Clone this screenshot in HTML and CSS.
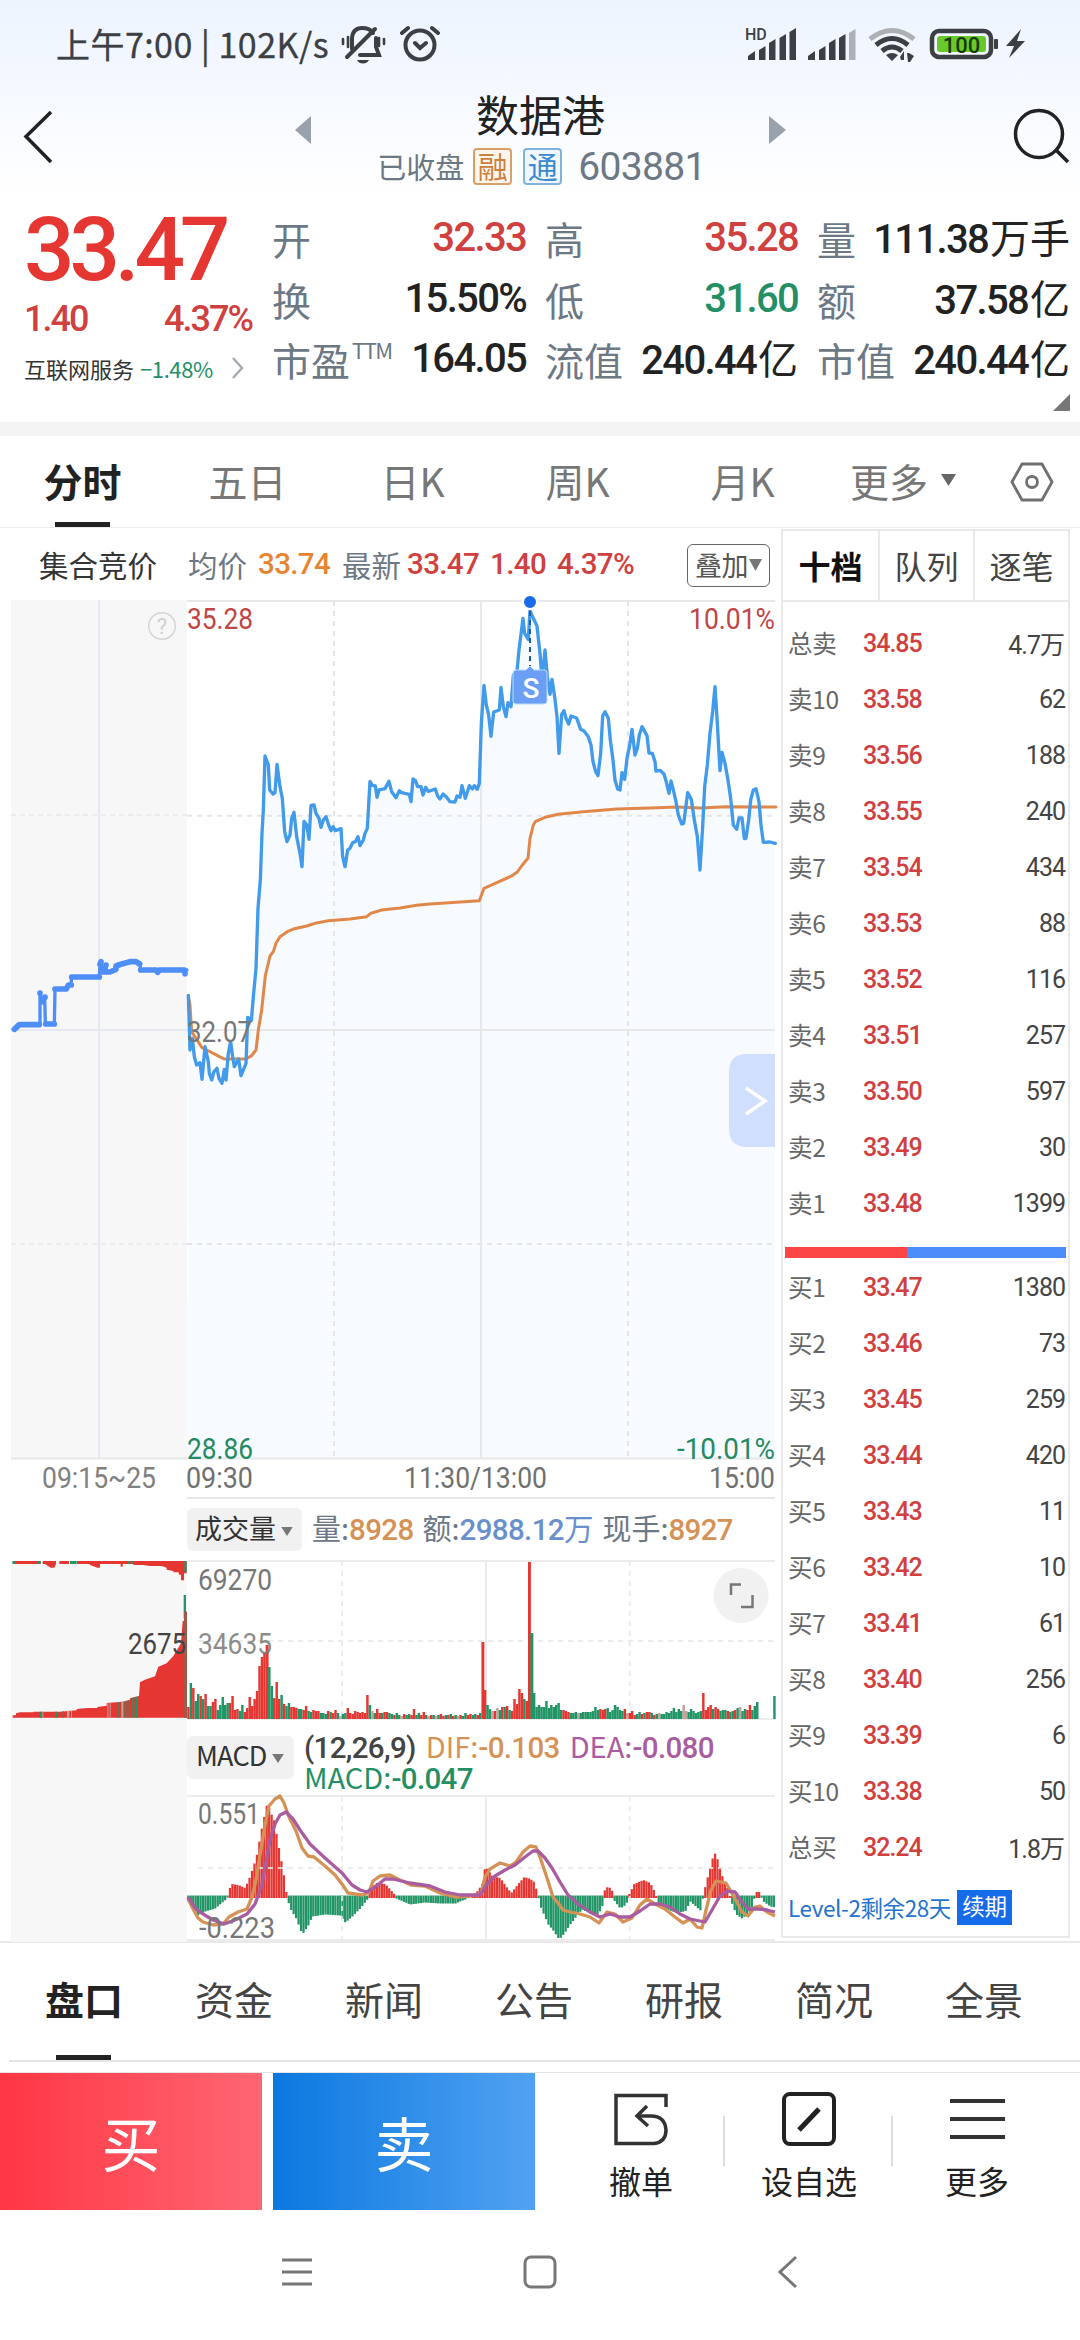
FILE: index.html
```html
<!DOCTYPE html>
<html lang="zh-CN">
<head>
<meta charset="utf-8">
<title>数据港 603881</title>
<link rel="stylesheet" href="styles.css">
</head>
<body>
<div class="screen">
  <div class="top">
    <div class="status">
      <span class="status-text">上午7:00 | 102K/s</span>
      <svg class="status-left" width="110" height="60" viewBox="330 15 110 60" fill="none" stroke="#3c3f43" stroke-linecap="round">
        <path d="M352 49V38Q353 28 362 28Q370 28 373 33M376 38V47L379 55H360" stroke-width="4"/>
        <path d="M347 57L375 29" stroke-width="4"/>
        <path d="M343 39V44M348 37V47M379 38V46M384 39V44" stroke-width="2.6"/>
        <path d="M357 60H369Q367 63.500 363 63.500Q359 63.500 357 60Z" fill="#3c3f43" stroke="none"/>
        <circle cx="420" cy="45" r="14.500" stroke-width="4"/>
        <path d="M402 33L408 28M432 28L438 33M415 43L420 48L426 43" stroke-width="4"/>
      </svg>
      <svg class="status-right" width="300" height="60" viewBox="735 15 300 60">
        <text x="745" y="40" class="hd">HD</text>
        <g fill="#3c3f43">
          <path d="M748 60V56L755 51V60ZM759 60V50L765.500 46V60ZM769 60V43L775.500 39V60ZM779.500 60V38L786 34V60ZM789.500 60V32L796 28V60Z"/>
          <path d="M808 60V56L815 51V60ZM819 60V50L825.500 46V60ZM829 60V43L835.500 39V60ZM839 60V38L845.500 34V60Z"/>
          <path d="M849 60V33L855.500 29V60Z" fill="#adb0b5"/>
          <path d="M886 55L892 61L898 55Q892 51 886 55ZM900 57L904 51V60H901ZM907 53H909L914 56L910 62H908Z"/>
        </g>
        <g fill="none" stroke="#3c3f43" stroke-width="5">
          <path d="M870 39Q892 22 914 39" stroke="#adb0b5"/>
          <path d="M876 45Q892 32 908 45M882 51Q892 43 902 51"/>
          <rect x="932" y="31" width="59" height="26" rx="7" stroke-width="4.500"/>
        </g>
        <rect x="937" y="36" width="49" height="16" rx="3" fill="#68ca2a"/>
        <text x="961.500" y="52.500" class="batt">100</text>
        <rect x="994" y="39" width="4" height="10" rx="1" fill="#3c3f43"/>
        <path d="M1021 29L1006 46H1014L1009 58L1025 41H1017Z" fill="#3c3f43"/>
      </svg>
    </div>
    <div class="header">
      <svg width="40" height="60" viewBox="18 106 40 60" fill="none" stroke="#222" stroke-width="3.500"><path d="M51 112L26 136.500L51 162"/></svg>
      <svg width="20" height="30" viewBox="294 115 20 30"><path d="M311 116V144L295 130Z" fill="#98a2ad"/></svg>
      <div class="title">
        <div class="name">数据港</div>
        <div class="sub"><span>已收盘</span><i class="badge margin">融</i><i class="badge link">通</i><span class="num code">603881</span></div>
      </div>
      <svg width="20" height="30" viewBox="767 115 20 30"><path d="M769 116V144L786 130Z" fill="#98a2ad"/></svg>
      <svg width="60" height="60" viewBox="1012 106 60 60" fill="none" stroke="#222" stroke-width="3.500"><circle cx="1039" cy="134" r="23.500"/><path d="M1055 149L1068 162"/></svg>
    </div>
  </div>

  <div class="quote">
    <div class="last">
      <div class="price num">33.47</div>
      <div class="delta num"><span>1.40</span><span>4.37%</span></div>
      <div class="sector"><span>互联网服务</span><span class="down">−1.48%</span><svg width="13" height="22" viewBox="0 0 13 22" fill="none" stroke="#a5acb4" stroke-width="2.500"><path d="M2 1L11 11L2 21"/></svg></div>
    </div>
    <div class="facts">
      <div class="fact"><span>开</span><b class="num up">32.33</b></div>
      <div class="fact"><span>高</span><b class="num up">35.28</b></div>
      <div class="fact"><span>量</span><b class="num">111.38<em>万手</em></b></div>
      <div class="fact"><span>换</span><b class="num">15.50%</b></div>
      <div class="fact"><span>低</span><b class="num down">31.60</b></div>
      <div class="fact"><span>额</span><b class="num">37.58<em>亿</em></b></div>
      <div class="fact"><span>市盈<sup>TTM</sup></span><b class="num">164.05</b></div>
      <div class="fact"><span>流值</span><b class="num">240.44<em>亿</em></b></div>
      <div class="fact"><span>市值</span><b class="num">240.44<em>亿</em></b></div>
    </div>
    <svg class="corner" width="17" height="17" viewBox="0 0 17 17"><path d="M17 0V17H0Z" fill="#777"/></svg>
  </div>

  <div class="periods">
    <div class="period on">分时</div><div class="period">五日</div><div class="period">日K</div><div class="period">周K</div><div class="period">月K</div>
    <div class="period more">更多<svg width="15" height="12" viewBox="0 0 15 12"><path d="M0 0H15L7.500 12Z" fill="#666"/></svg></div>
    <div class="setting"><svg width="44" height="42" viewBox="0 0 44 42" fill="none" stroke="#707070" stroke-width="2.800"><path d="M12 3H32L42 21L32 39H12L2 21Z" stroke-linejoin="round"/><circle cx="22" cy="21" r="5.500"/></svg></div>
  </div>

  <div class="main">
    <div class="charts">
      <div class="info">
        <span class="auction">集合竞价</span>
        <span class="lbl">均价</span><b class="num avg">33.74</b>
        <span class="lbl latest">最新</span><b class="num up">33.47</b><b class="num up chg">1.40</b><b class="num up">4.37%</b>
        <div class="overlay">叠加<svg width="13" height="12" viewBox="0 0 13 12"><path d="M0 0H13L6.500 12Z" fill="#777"/></svg></div>
      </div>
      <svg class="plot" width="778" height="907" viewBox="0 593 778 907">
        <rect x="11" y="600" width="176" height="858" fill="#f7f7f7"/>
        <path d="M99 600V1458M11 1030H187" stroke="#e6e9f2" stroke-width="2"/>
        <path d="M11 815H187M11 1244H187" stroke="#ececef" stroke-width="2" stroke-dasharray="5 4"/>
        <g transform="translate(0 580) scale(.33333)">
          <path id="area" fill="#f7faff"/>
        </g>
        <path d="M187 601H775M11 1458.500H775M187 1030H775M481 601V1458M187 1498H775" stroke="#e7e8e8" stroke-width="2" fill="none"/>
        <path d="M187 815.700H775M187 1244H775M334 601V1458M628 601V1458" stroke="#e5e5e5" stroke-width="2" stroke-dasharray="5 5" fill="none"/>
        <g transform="translate(0 580) scale(.33333)" fill="none" stroke-linejoin="round" stroke-linecap="round">
          <polyline stroke="#e0884a" stroke-width="9" points="565,1248 570,1275 575,1355 590,1378 605,1402 620,1410 640,1420 672,1437 738,1437 755,1427 768,1410 775,1350 785,1290 796,1187 810,1128 820,1115 828,1090 840,1070 862,1055 880,1047 920,1038 945,1030 985,1022 1050,1017 1100,1010 1112,1000 1145,990 1200,984 1250,976 1290,972 1370,967 1438,962 1452,925 1482,912 1535,888 1552,876 1567,855 1584,835 1590,775 1600,735 1606,725 1635,712 1675,703 1750,695 1850,687 1950,684 2030,681 2100,684 2180,680 2328,681"/>
          <polyline id="price" stroke="#429bea" stroke-width="10" points="565,1246 570,1410 577,1375 583,1430 590,1455 600,1448 606,1498 615,1400 625,1445 628,1480 635,1500 642,1475 651,1465 657,1495 666,1510 673,1468 678,1500 685,1420 692,1385 698,1430 703,1460 716,1437 723,1487 738,1450 743,1312 754,1322 760,1250 768,1165 774,985 781,900 786,760 790,690 795,528 805,555 809,630 819,642 825,638 831,553 840,620 847,655 854,755 861,785 870,765 875,715 882,697 890,770 900,820 906,860 912,724 920,735 927,778 933,676 942,675 948,700 957,715 963,742 970,720 978,710 986,735 993,752 999,740 1006,752 1023,746 1028,830 1035,860 1043,810 1050,805 1058,788 1066,785 1074,770 1080,797 1090,780 1095,760 1102,745 1110,604 1117,616 1126,618 1131,652 1137,630 1155,626 1167,604 1175,635 1188,653 1198,632 1205,638 1228,643 1233,665 1239,597 1246,601 1253,620 1263,620 1269,645 1277,622 1285,634 1306,627 1313,648 1320,657 1329,642 1340,652 1350,665 1365,666 1371,648 1380,652 1386,617 1396,655 1408,617 1417,627 1423,617 1432,628 1438,610 1444,430 1452,316 1459,375 1466,405 1473,469 1481,396 1498,390 1503,322 1510,380 1518,410 1524,368 1533,380 1540,285 1549,295 1557,210 1569,115 1574,160 1585,178 1590,92 1600,115 1611,138 1620,220 1626,300 1635,210 1642,290 1650,343 1656,298 1664,350 1671,410 1677,520 1685,403 1692,392 1698,415 1706,432 1713,408 1730,414 1742,448 1752,453 1765,470 1773,495 1779,545 1787,575 1794,587 1802,520 1808,408 1815,395 1825,415 1831,480 1839,540 1845,600 1853,627 1860,630 1866,578 1874,598 1881,535 1890,490 1896,448 1905,525 1912,505 1918,465 1926,440 1941,467 1947,519 1957,520 1965,545 1968,573 1980,571 1992,582 2000,610 2007,640 2013,603 2020,630 2028,665 2035,705 2045,732 2051,730 2057,685 2063,638 2074,658 2083,720 2092,770 2100,870 2108,740 2114,620 2122,555 2130,460 2138,395 2145,320 2152,430 2160,572 2166,517 2175,550 2184,600 2192,655 2200,735 2210,748 2217,714 2226,714 2233,776 2238,775 2246,720 2252,660 2260,630 2268,626 2277,665 2283,735 2290,787 2310,786 2326,790"/>
          <g stroke="#4d8ef9">
            <polyline stroke-width="10" points="42,1348 52,1335 120,1334 120,1238 127,1268 134,1250 136,1332 163,1332 165,1227 200,1225 205,1215 213,1215 215,1191 298,1191 300,1150 303,1144 307,1176 318,1155 320,1176 335,1175 348,1165 355,1152 375,1150 390,1144 410,1144 420,1152 422,1170 561,1170"/>
            <path stroke-width="17" d="M43 1348L58 1334H118M120 1239V1240M128 1264V1265M135 1251V1252M137 1332H163M165 1227H199L205 1215H214M215 1191H298M300 1153L303 1145M318 1155V1156M307 1176H330L348 1168V1158L365 1152L390 1145H408L419 1152M422 1170H468L473 1177L478 1170H553M555 1180V1181"/>
          </g>
        </g>
        <circle cx="162" cy="626" r="13.300" fill="none" stroke="#d5d5d5" stroke-width="1.500"/>
        <text x="162" y="634" class="hint" text-anchor="middle">?</text>
        <circle cx="530" cy="602" r="7" fill="#1a6be6" stroke="#fff" stroke-width="2"/>
        <path d="M530 611V666" stroke="#1f5c9e" stroke-width="2" stroke-dasharray="5 4"/>
        <path d="M516 670H526L530 666L534 670H544Q547 670 547 673V701Q547 704 544 704H516Q513 704 513 701V673Q513 670 516 670Z" fill="#6b9ff5" stroke="#b9dbfc" stroke-width="1"/>
        <text x="531" y="698" class="sell-mark" text-anchor="middle">S</text>
        <path d="M775 1054H747Q729 1054 729 1072V1128Q729 1147 747 1147H775Z" fill="#cfdffd"/>
        <path d="M746 1088L765 1101L746 1114" fill="none" stroke="#fff" stroke-width="3.500"/>
        <g class="axis">
          <text x="187" y="628.500" fill="#c04545" textLength="66" lengthAdjust="spacingAndGlyphs">35.28</text>
          <text x="775" y="629" fill="#c04545" text-anchor="end" textLength="86" lengthAdjust="spacingAndGlyphs">10.01%</text>
          <text x="187" y="1042" fill="#777" textLength="65" lengthAdjust="spacingAndGlyphs">32.07</text>
          <text x="187" y="1459" fill="#248a62" textLength="66" lengthAdjust="spacingAndGlyphs">28.86</text>
          <text x="775" y="1459" fill="#248a62" text-anchor="end" textLength="98" lengthAdjust="spacingAndGlyphs">-10.01%</text>
          <text x="42" y="1488" fill="#808080" textLength="114" lengthAdjust="spacingAndGlyphs">09:15~25</text>
          <text x="186" y="1488" fill="#707070" textLength="67" lengthAdjust="spacingAndGlyphs">09:30</text>
          <text x="404" y="1488" fill="#707070" textLength="143" lengthAdjust="spacingAndGlyphs">11:30/13:00</text>
          <text x="775" y="1488" fill="#707070" text-anchor="end" textLength="66" lengthAdjust="spacingAndGlyphs">15:00</text>
        </g>
      </svg>
      <div class="indicator volume-head">
        <div class="pick">成交量<svg width="12" height="9" viewBox="0 0 14 11"><path d="M0 0H14L7 11Z" fill="#777"/></svg></div>
        <div class="readout"><span>量:<b class="num orange">8928</b></span><span>额:<b class="num blue">2988.12<em>万</em></b></span><span>现手:<b class="num orange">8927</b></span></div>
      </div>
      <svg class="plot" width="778" height="175" viewBox="0 1555 778 175">
        <rect x="11" y="1562" width="176" height="168" fill="#f7f7f7"/>
        <path d="M187 1561H775M187 1719H775M486 1561V1719" stroke="#ececec" stroke-width="2"/>
        <path d="M198 1641H775M342 1561V1719M629.700 1561V1719" stroke="#ececec" stroke-width="2" stroke-dasharray="5 5"/>
        <g transform="translate(0 1555) scale(.33333)">
          <path fill="#e53632" d="M38 18H122V27H38ZM128 18H168V27L163 38H152L135 27H128ZM178 18H207V27H178ZM231 18H560V55H552V76H543V60L536 58V52H520V48L500 44V38L485 33H450L430 30H400V27H368V35H362V27H300V38H292L270 30V27H231Z"/>
          <path fill="#e53632" d="M38 488V481H48V475L60 472H100V470H180L230 466V462L262 459H292V456L320 452V444L368 440L390 434V430L417 423L420 382L435 374L465 364L475 335L500 325L520 303L527 292L543 265L548 198H552V170H561V488Z"/>
          <path fill="#219565" d="M38 18H48V27H38ZM112 18H122V27H112ZM210 18H230V27H210ZM384 18H389V27H384ZM394 18H398V27H394ZM553 18H560V52H553ZM119 470H126V488H119ZM165 470H171V488H165ZM188 469H192V488H188ZM355 441H359V488H355ZM374 438H379V488H374ZM386 435H390V488H386ZM397 428H403V488H397ZM407 425H414V488H407ZM551 120H558V190H551Z"/>
          <path fill="#c3a29a" d="M201 467H208V488H201ZM213 468H216V488H213ZM322 443H325V488H322ZM329 443H332V488H329ZM364 440H370V488H364ZM127 470H130V488H127Z"/>
          <path fill="#a05a49" d="M552 170H561V488H552Z"/>
        </g>
        <g id="volume"></g>
        <g class="axis">
          <text x="198" y="1590" fill="#777" textLength="74" lengthAdjust="spacingAndGlyphs">69270</text>
          <text x="198" y="1654" fill="#777" fill-opacity=".85" textLength="74" lengthAdjust="spacingAndGlyphs">34635</text>
          <text x="128" y="1654" fill="#444" textLength="58" lengthAdjust="spacingAndGlyphs">2675</text>
        </g>
        <circle cx="741" cy="1595.500" r="27.500" fill="#f1f1f1"/>
        <path d="M731 1595V1584.500H741M741 1607H752.500V1595" fill="none" stroke="#777" stroke-width="2.500"/>
      </svg>
      <div class="indicator macd-head">
        <div class="pick">MACD<svg width="12" height="9" viewBox="0 0 13 10"><path d="M0 0H13L6.500 10Z" fill="#777"/></svg></div>
        <div class="readout macd-read"><span class="dark"><b class="num">(12,26,9)</b></span><span class="orange">DIF:<b class="num">-0.103</b></span><span class="purple">DEA:<b class="num">-0.080</b></span><span class="green">MACD:<b class="num">-0.047</b></span></div>
      </div>
      <svg class="plot" width="778" height="152" viewBox="0 1790 778 152">
        <rect x="11" y="1790" width="176" height="152" fill="#f7f7f7"/>
        <path d="M187 1796H775M187 1940H775M486 1796V1940" stroke="#ececec" stroke-width="2"/>
        <g id="macd"></g>
        <path d="M198 1868H775M342 1796V1940M629.700 1796V1940" stroke="#e9e9e9" stroke-opacity=".8" stroke-width="2" stroke-dasharray="5 5"/>
        <g fill="none" stroke-width="3.300" stroke-linejoin="round">
          <polyline stroke="#d59257" points="188,1898 192,1907 198,1918 203,1922 213,1925 223,1924 229,1917 238,1912 247,1909 252,1897 256,1880 260,1855 265,1825 269,1806 275,1799 280,1796 284,1803 289,1817 296,1831 302,1848 308,1856 314,1857 325,1866 335,1875 342,1884 348,1893 355,1894 363,1895 369,1892 373,1881 380,1876 390,1875 400,1880 411,1885 425,1886 440,1893 455,1897 470,1896 481,1894 485,1877 490,1869 500,1863 510,1866 516,1862 523,1852 530,1846 536,1847 541,1860 547,1878 553,1897 558,1903 563,1910 570,1912 580,1914 590,1917 599,1923 607,1912 615,1914 623,1922 632,1918 640,1905 647,1899 655,1904 665,1909 675,1917 683,1923 690,1919 697,1927 702,1928 706,1910 711,1890 716,1881 726,1883 733,1895 742,1912 748,1916 755,1907 760,1906 767,1912 775,1916"/>
          <polyline stroke="#a95c9f" points="188,1897 195,1908 203,1914 213,1920 224,1924 235,1920 247,1914 255,1904 262,1885 266,1862 270,1840 275,1824 280,1815 286,1812 293,1819 300,1830 310,1844 325,1858 342,1873 352,1885 360,1890 367,1892 375,1887 385,1879 393,1879 410,1883 430,1886 445,1892 460,1895 480,1895 487,1884 495,1876 505,1870 515,1865 525,1857 533,1851 538,1851 545,1858 552,1868 560,1882 568,1895 578,1904 590,1912 600,1917 610,1914 620,1917 630,1917 640,1911 650,1904 660,1904 670,1907 680,1914 690,1919 705,1922 712,1910 720,1896 727,1891 735,1892 742,1902 748,1909 758,1909 767,1910 775,1912"/>
        </g>
        <g class="axis">
          <text x="198" y="1824" fill="#777" textLength="62" lengthAdjust="spacingAndGlyphs">0.551</text>
          <text x="199" y="1938" fill="#777" textLength="76" lengthAdjust="spacingAndGlyphs">-0.223</text>
        </g>
      </svg>
    </div>

    <div class="book">
      <div class="book-tabs"><div class="on">十档</div><div>队列</div><div>逐笔</div></div>
      <div class="rows" id="asks"></div>
      <div class="ratio"><i></i></div>
      <div class="rows" id="bids"></div>
      <div class="level">Level-2剩余28天<span>续期</span></div>
    </div>
  </div>

  <div class="sections">
    <div class="on">盘口</div><div>资金</div><div>新闻</div><div>公告</div><div>研报</div><div>简况</div><div>全景</div>
  </div>

  <div class="actions">
    <div class="trade buy">买</div>
    <div class="trade sell">卖</div>
    <div class="tool"><svg width="60" height="60" viewBox="612 2090 60 60" fill="none" stroke="#333" stroke-width="3.500"><path d="M667 2108V2096.500H617V2144.500H655Q667 2143 667 2131Q666 2117 652 2117H639"/><path d="M648 2107L638 2117L649 2127"/></svg><span>撤单</span></div>
    <div class="tool"><svg width="60" height="60" viewBox="777 2089 60 60" fill="none" stroke="#222"><rect x="782" y="2094" width="50" height="50" rx="6" stroke-width="4"/><path d="M797 2130L817 2109" stroke-width="5"/></svg><span>设自选</span></div>
    <div class="tool"><svg width="60" height="60" viewBox="945 2089 60 60" fill="none" stroke="#333" stroke-width="4"><path d="M948 2101H1003M948 2119H1003M948 2137H1003"/></svg><span>更多</span></div>
  </div>
  <div class="nav">
    <svg width="32" height="36" viewBox="281 2254 32 36" stroke="#777" stroke-width="3"><path d="M282 2260H312M282 2272H312M282 2284H312"/></svg>
    <svg width="36" height="36" viewBox="522 2254 36 36" fill="none" stroke="#777" stroke-width="3"><rect x="525" y="2257" width="30" height="30" rx="6"/></svg>
    <svg width="24" height="36" viewBox="776 2254 24 36" fill="none" stroke="#777" stroke-width="3"><path d="M796 2257L780 2272L796 2287"/></svg>
  </div>
</div>
<script src="app.js"></script>
</body>
</html>
```
FILE: styles.css
```css
* { box-sizing: border-box; }
body { margin: 0; background: #fff; color: #222; font-family: "Noto Sans CJK SC", sans-serif; }
svg { display: block; flex: none; }
em, i { font-style: normal; }
.screen { width: 1080px; height: 2340px; overflow: hidden; display: flex; flex-direction: column; }
.num { font-family: Roboto, "Noto Sans CJK SC", sans-serif; letter-spacing: -.035em; font-weight: 500; }
.num em { font-family: "Noto Sans CJK SC", sans-serif; letter-spacing: 0; font-weight: 400; }
.up { color: #cf403e; }
.down { color: #248f65; }
.orange { color: #d59257; }
.blue { color: #6a90cc; }
.purple { color: #a95c9f; }
.green { color: #248f65; }
.dark { color: #444; }

.top { height: 200px; background: linear-gradient(#edf4ff, #fff); flex: none; }
.status { height: 90px; display: flex; align-items: center; padding-left: 56px; color: #3c3f43; }
.status-text { width: 274px; font-size: 34px; line-height: 60px; white-space: nowrap; letter-spacing: .45px; margin-top: -3px; -webkit-text-stroke: .3px #3c3f43; }
.status-right { margin-left: 295px; }
.hd { font: 500 16px Roboto, sans-serif; fill: #3c3f43; }
.batt { font: 500 22px Roboto, sans-serif; fill: #173b0a; text-anchor: middle; }
.header { height: 110px; display: flex; align-items: flex-start; padding-left: 18px; }
.header > svg:nth-child(1) { margin-top: 16px; }
.header > svg:nth-child(2) { margin: 25px 0 0 236px; }
.title { width: 453px; display: flex; flex-direction: column; align-items: center; }
.header > svg:nth-child(4) { margin-top: 25px; }
.header > svg:nth-child(5) { margin: 16px 0 0 225px; }
.name { font-size: 43px; line-height: 56px; margin-top: -5px; }
.sub { display: flex; align-items: center; height: 44px; font-size: 29px; line-height: 40px; color: #6d7885; margin-top: 3px; margin-left: 2px; }
.badge { width: 39px; height: 37px; line-height: 31px; font-size: 30px; text-align: center; border: 2px solid; border-radius: 4px; margin-left: 9px; }
.badge.margin { color: #cd803b; border-color: #dba069; background: #fdf6ef; }
.badge.link { color: #3b8bd0; border-color: #7fb3dd; background: #f0f7fd; margin-left: 11px; }
.code { font-size: 39px; font-weight: 400; margin-left: 16px; letter-spacing: -.018em; position: relative; top: 1px; }

.quote { height: 236px; border-bottom: 14px solid #f4f4f4; display: flex; position: relative; flex: none; }
.last { width: 272px; padding-left: 24px; }
.price { font-size: 89px; line-height: 100px; letter-spacing: -.058em; color: #e53632; }
.delta { width: 228px; display: flex; justify-content: space-between; font-size: 36px; line-height: 38px; letter-spacing: -.055em; color: #cf403e; }
.sector { display: flex; align-items: center; font-size: 22px; line-height: 30px; margin-top: 15px; white-space: nowrap; color: #333; }
.sector .down { margin-left: 6px; width: 91px; letter-spacing: -.4px; }
.facts { display: grid; grid-template-columns: 254px 253px 253px; column-gap: 19px; grid-auto-rows: 60.500px; height: 182px; padding-top: 8px; }
.fact { display: flex; justify-content: space-between; align-items: center; font-size: 39px; line-height: 60px; color: #6d7885; white-space: nowrap; }
.fact b { font-size: 40px; color: #222; letter-spacing: -.042em; }
.fact b em { margin-left: 2px; }
.fact b.up { color: #cf403e; }
.fact b.down { color: #248f65; }
.fact sup { font-size: 22px; line-height: 0; vertical-align: 17px; letter-spacing: -1.500px; margin-left: 2px; }
.corner { position: absolute; left: 1053px; top: 194px; }

.periods { height: 92px; display: flex; border-bottom: 1px solid #ececec; flex: none; }
.period { width: 165px; display: flex; justify-content: center; align-items: center; gap: 13px; font-size: 39px; color: #777; position: relative; line-height: 90px; padding-bottom: 3px; }
.period.more { padding-right: 9px; }
.on { font-weight: 700; color: #222; position: relative; }
.periods .on::after, .sections .on::after { content: ""; position: absolute; bottom: 0; left: 55px; width: 55px; height: 5px; background: #222; }
.setting { width: 84px; display: flex; justify-content: center; align-items: center; }

.main { height: 1415px; display: flex; border-bottom: 2px solid #e9e9e9; flex: none; }
.charts { width: 781px; height: 1413px; }
.info { height: 65px; padding: 7px 0 0 39px; display: flex; align-items: center; font-size: 29.500px; line-height: 40px; white-space: nowrap; }
.info .auction { width: 149px; color: #333; }
.lbl { color: #6d7885; }
.info .num { font-size: 29.500px; margin-left: 11px; letter-spacing: -.022em; }
.info .avg { color: #e8842f; }
.info .latest { margin-left: 12px; }
.info .latest + .num { margin-left: 6px; }
.overlay { margin: 2px 11px 0 auto; width: 83px; height: 43px; border: 1.500px solid #666; border-radius: 6px; display: flex; align-items: center; justify-content: center; gap: 1px; font-size: 27px; color: #555; letter-spacing: -.5px; line-height: 38px; }
.axis { font: 30px Roboto, sans-serif; }
.hint { font: 22px Roboto, sans-serif; fill: #d0d0d0; }
.sell-mark { font: 500 28px Roboto, sans-serif; fill: #fff; }
.indicator { display: flex; padding-left: 187px; }
.volume-head { height: 55px; padding-top: 8px; }
.pick { display: flex; align-items: center; background: #f1f1f1; border-radius: 6px; color: #333; font-size: 27px; line-height: 38px; padding-bottom: 3px; }
.pick svg { margin: 7px 0 0 5px; }
.volume-head .pick { width: 115px; height: 43px; padding-left: 8px; }
.volume-head .readout { display: flex; gap: 9px; margin-left: 10px; font-size: 29px; line-height: 38px; color: #6d7885; white-space: nowrap; }
.readout .num { font-size: 29.500px; letter-spacing: -.022em; }
.macd-head { height: 60px; padding-top: 6px; }
.macd-head .pick { width: 107px; height: 43px; padding-left: 9px; font-size: 27px; letter-spacing: -.8px; padding-bottom: 5px; }
.macd-read { width: 470px; margin-left: 10px; display: flex; flex-wrap: wrap; column-gap: 10px; font-size: 29px; line-height: 28px; height: 56px; margin-top: -5px; white-space: nowrap; }
.macd-head { background: linear-gradient(#f7f7f7, #f7f7f7) 11px 0 / 176px 100% no-repeat; }

.book { width: 289px; height: 1409px; margin-top: 1px; border: 2px solid #e9e9e9; display: flex; flex-direction: column; }
.book-tabs { height: 71px; display: grid; grid-template-columns: repeat(3, 1fr); border-bottom: 2px solid #e9e9e9; flex: none; }
.book-tabs div { text-align: center; font-size: 32px; line-height: 69px; color: #444; border-left: 2px solid #e9e9e9; }
.book-tabs div:first-child { border-left: 0; }
.book-tabs .on { color: #111; }
#asks { margin-top: 13px; }
.row { height: 56px; display: flex; align-items: center; padding: 0 3px 0 5px; font-size: 24.500px; color: #666; letter-spacing: -.3px; }
.row .num { font-size: 25px; letter-spacing: -.04em; }
.row .p { color: #cf403e; margin-left: 75px; }
.row .tag { width: 0; white-space: nowrap; padding-bottom: 2px; }
.row .v { margin-left: auto; font-weight: 400; color: #444; }
.ratio { height: 11px; margin: 16px 2px 0; background: #4c8dfb; flex: none; }
.ratio i { display: block; width: 122px; height: 11px; background: #fb4545; }
.level { display: flex; align-items: center; height: 35px; margin: 16px 0 0 5px; font-size: 22.500px; line-height: 31px; letter-spacing: -.4px; color: #2473cf; white-space: nowrap; padding-bottom: 2px; }
.level span { background: #166be8; color: #fff; height: 35px; width: 55px; line-height: 31px; text-align: center; margin-left: 6px; }
#bids { margin-top: 1px; }

.sections { height: 119px; margin-left: 9px; border-bottom: 2px solid #e5e5e5; display: flex; flex: none; }
.sections div { width: 150px; text-align: center; font-size: 39px; line-height: 110px; color: #444; }
.sections .on { color: #222; }
.sections .on::after { left: 47px; }
.actions { height: 139px; margin-top: 10px; border-top: 1px solid #e5e5e5; display: flex; flex: none; }
.trade { width: 262px; height: 137px; color: #fff; font-size: 59px; line-height: 137px; text-align: center; }
.buy { background: linear-gradient(90deg, #ff3645, #ff6672); margin-right: 11px; }
.sell { background: linear-gradient(90deg, #0b78e0, #51a2f2); margin-right: 22px; }
.tool { width: 168px; display: flex; flex-direction: column; align-items: center; padding-top: 16px; font-size: 32px; color: #222; background: linear-gradient(#ddd, #ddd) 100% 43px / 2px 50px no-repeat; }
.tool span { line-height: 40px; margin-top: 11px; }
.tool:last-child { background: none; }
.nav { height: 122px; display: flex; align-items: center; padding-left: 281px; }
.nav svg:nth-child(2) { margin-left: 209px; }
.nav svg:nth-child(3) { margin-left: 218px; }
```
FILE: app.js
```js
const price = document.getElementById('price').getAttribute('points');
document.getElementById('area').setAttribute('d', 'M562,2635 L' + price.split(' ').join(' L') + ' L2326,2635 Z');

// One entry per minute: bar height and direction (r up, g down, w flat).
const minutes = '12r 36g 31r 18g 25g 23r 20g 25r 13g 13g 17r 20r 9g 14g 22g 14g 16g 16r 23r 9r 10r 8g 14g 7r 11r 22r 13r 20r 28r 53r 62r 66r 74r 52g 33g 21r 37r 20r 24g 15r 13g 16g 12r 12r 11r 10g 10g 9r 13r 8g 7g 9r 8r 8r 6g 6g 5g 8r 7g 6r 9r 6g 3w 5g 6g 11r 6r 5r 8r 7r 6r 7r 6r 24r 14g 8w 6g 10r 6r 6g 7r 7r 6g 5g 4r 6g 4g 3w 5r 4g 5g 4r 10r 4g 6g 4r 7r 4g 3w 4r 4g 3w 4g 5r 3r 4g 4r 5g 3r 4g 3w 4r 3g 6g 4r 5r 4g 5g 4r 6g 77r 29r 14g 10g 8w 8r 11w 9g 12r 12g 13r 9g 8r 20r 15r 30r 26r 20g 18r 157r 86g 26g 12g 14g 12g 12g 18g 11g 14g 12g 14g 16g 9g 9r 8r 7r 6g 6g 7g 6w 6g 7g 7g 7g 7g 8g 12g 9g 10r 9r 10r 11g 7g 9g 14g 12g 9g 8g 10r 6w 6r 8r 4r 5g 7g 5r 6g 7r 7r 6g 4r 5g 6w 5g 5g 7g 6g 8g 11g 7g 10g 8g 14w 8w 7g 10g 8g 6g 7g 8g 26r 9r 12r 14r 10g 12r 10r 8g 9g 9g 8r 7g 8g 9r 11g 12w 8g 10g 9r 14r 9g 13g 17g 0g 0g 0g 0g 0g 0g 23g'.split(' ');
const tint = { r: '#e53632', g: '#219565', w: '#c3a29a' };
const bar = (x, y, h, c, w = 2.25) => `<rect x="${x.toFixed(2)}" y="${y.toFixed(1)}" width="${w}" height="${h.toFixed(1)}" fill="${c}"/>`;
document.getElementById('volume').innerHTML = minutes.map((m, i) => {
  const h = parseInt(m, 10);
  return h ? bar(187.2 + i * 586 / (minutes.length - 1), 1719 - h, h, tint[m.slice(-1)], h > 70 ? 2.9 : 2.45) : '';
}).join('');

const turns = [[188,-5],[198,-19],[205,-15],[215,-12],[222,-6],[227,-2],[228,3],[231,12],[238,11],[245,8],[250,20],[256,38],[262,70],[267,93],[271,82],[274,75],[279,46],[282,30],[285,12],[286.5,0],[290,-12],[296,-22],[302,-38],[308,-29],[312,-20],[325,-18],[340,-19],[345,-26],[352,-20],[360,-12],[367,-3],[369,6],[376,13],[385,12],[394,2],[396,-2],[410,-8],[425,-6],[440,-7],[455,-7],[465,-3],[470,0],[476,3],[482,12],[485,30],[492,20],[500,18],[507,8],[511,3],[518,12],[524,19],[530,17],[534,14],[538,0],[541,-12],[548,-28],[553,-34],[559,-43],[564,-37],[570,-28],[576,-20],[582,-13],[590,-17],[598,-18],[602,-10],[604,5],[608,10],[612,5],[614,-4],[620,-12],[626,-8],[629,2],[634,12],[643,16],[650,13],[655,3],[658,-6],[665,-12],[675,-16],[685,-15],[690,-5],[700,-14],[704,5],[709,25],[714,44],[718,35],[722,20],[727,8],[731,-5],[736,-18],[742,-22],[748,-17],[753,-8],[755,4],[760,4],[762,-4],[770,-10],[776,-11]];
let bars = '';
for (let i = 0; i < 240; i++) {
  const x = 188 + i * 2.45;
  let k = 0;
  while (k < turns.length - 2 && turns[k + 1][0] < x) k++;
  const [x0, v0] = turns[k], [x1, v1] = turns[k + 1];
  const v = v0 + (v1 - v0) * (x - x0) / (x1 - x0);
  bars += v > 0 ? bar(x - .8, 1896 - v, v + 2, tint.r) : bar(x - .8, 1895.5, 1 - v, tint.g);
}
document.getElementById('macd').innerHTML = bars;

const fill = (id, rows) => {
  document.getElementById(id).innerHTML = rows.map(([t, p, v]) =>
    `<div class="row"><span class="tag">${t}</span><b class="num p">${p}</b><span class="num v">${v.replace('万', '<em>万</em>')}</span></div>`).join('');
};
fill('asks', [['总卖','34.85','4.7万'],['卖10','33.58','62'],['卖9','33.56','188'],['卖8','33.55','240'],['卖7','33.54','434'],['卖6','33.53','88'],['卖5','33.52','116'],['卖4','33.51','257'],['卖3','33.50','597'],['卖2','33.49','30'],['卖1','33.48','1399']]);
fill('bids', [['买1','33.47','1380'],['买2','33.46','73'],['买3','33.45','259'],['买4','33.44','420'],['买5','33.43','11'],['买6','33.42','10'],['买7','33.41','61'],['买8','33.40','256'],['买9','33.39','6'],['买10','33.38','50'],['总买','32.24','1.8万']]);
```
